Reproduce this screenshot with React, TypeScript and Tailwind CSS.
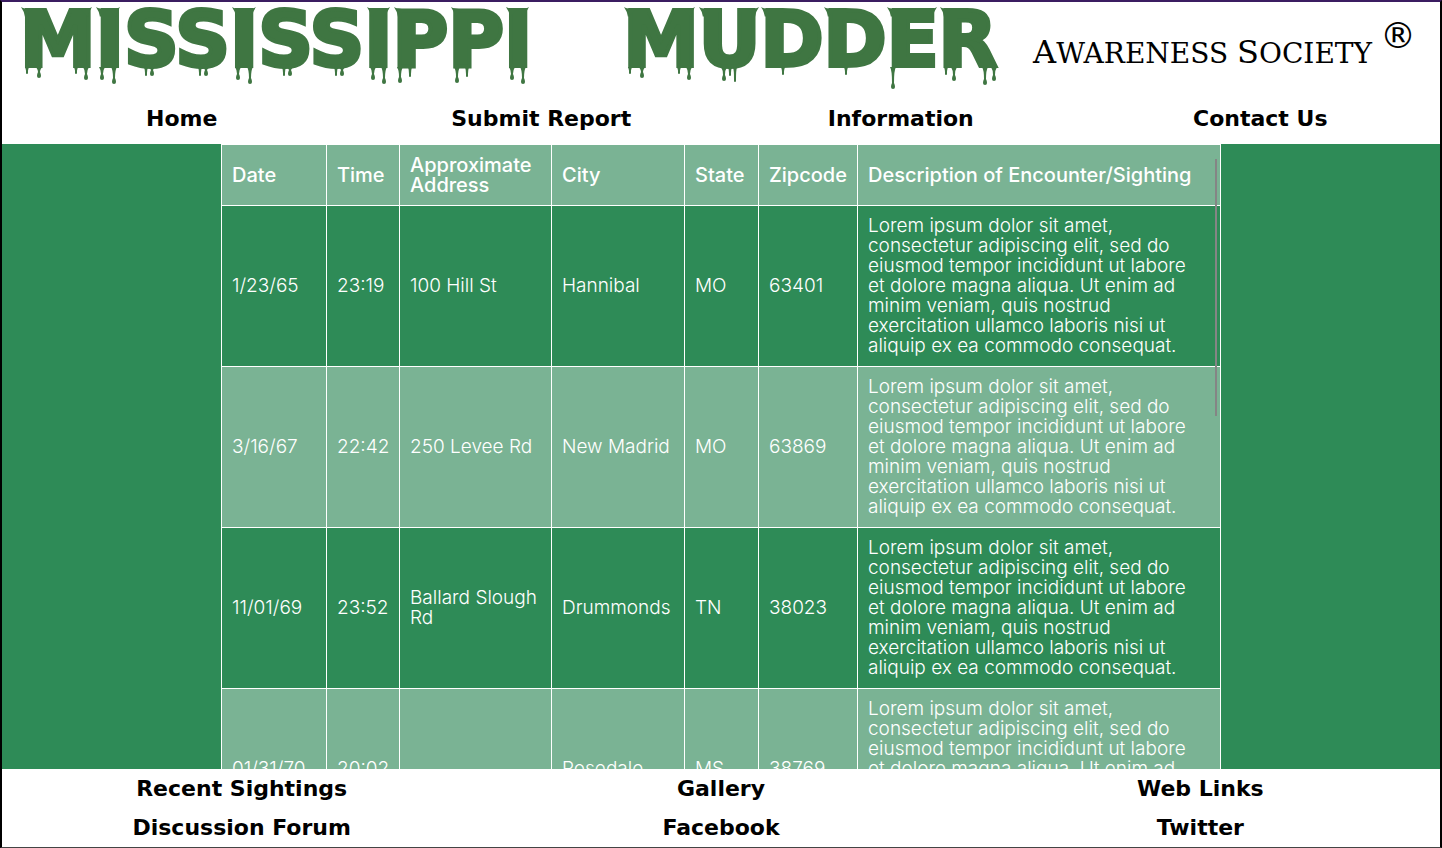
const LOREM =
  "Lorem ipsum dolor sit amet, consectetur adipiscing elit, sed do eiusmod tempor incididunt ut labore et dolore magna aliqua. Ut enim ad minim veniam, quis nostrud exercitation ullamco laboris nisi ut aliquip ex ea commodo consequat.";

const topLinks = ["Home", "Submit Report", "Information", "Contact Us"];
const bottomLinks = ["Recent Sightings", "Gallery", "Web Links", "Discussion Forum", "Facebook", "Twitter"];

const columns = [
  { label: "Date", width: "w-[105px]" },
  { label: "Time", width: "w-[73px]" },
  { label: "Approximate Address", width: "w-[152px]" },
  { label: "City", width: "w-[133px]" },
  { label: "State", width: "w-[74px]" },
  { label: "Zipcode", width: "w-[99px]" },
  { label: "Description of Encounter/Sighting", width: "" },
];

const sightings = [
  ["1/23/65", "23:19", "100 Hill St", "Hannibal", "MO", "63401"],
  ["3/16/67", "22:42", "250 Levee Rd", "New Madrid", "MO", "63869"],
  ["11/01/69", "23:52", "Ballard Slough Rd", "Drummonds", "TN", "38023"],
  ["01/31/70", "20:02", "", "Rosedale", "MS", "38769"],
];

type Drip = { x: number; len: number; r: number };

type DripWordProps = { text: string; drips: Drip[]; leftTips: number[]; rightTips: number[] };

function DripWord({ text, drips, leftTips, rightTips }: DripWordProps) {
  return (
    <span className="relative block font-['DejaVu_Sans'] text-[76px] leading-[76px] font-bold text-[#3f7642] [-webkit-text-stroke:4px_#3f7642]">
      {text}
      <svg className="absolute inset-0 h-full w-full overflow-visible fill-[#3f7642]" aria-hidden="true">
        {leftTips.map((x) => (
          <path key={`l${x}`} d={`M${x - 3} 5 Q${x} 7 ${x + 9} 7 L${x + 1} 15 Q${x} 9 ${x - 3} 5Z`} />
        ))}
        {rightTips.map((x) => (
          <path key={`r${x}`} d={`M${x + 3} 5 Q${x} 7 ${x - 9} 7 L${x - 1} 15 Q${x} 9 ${x + 3} 5Z`} />
        ))}
        {drips.map(({ x, len, r }) => (
          <path
            key={x}
            transform="translate(0 65)"
            d={`M${x - r - 1} 0 Q${x - 1} 3 ${x - 1} ${len - r * 3} Q${x - r} ${len - r * 2} ${x - r} ${len - r} A${r} ${r} 0 0 0 ${x + r} ${len - r} Q${x + r} ${len - r * 2} ${x + 1} ${len - r * 3} Q${x + 1} 3 ${x + r + 1} 0Z`}
          />
        ))}
      </svg>
    </span>
  );
}

const mississippiDrips: Drip[] = [
  { x: 7, len: 7, r: 1 }, { x: 19, len: 11, r: 2 }, { x: 56, len: 7, r: 1 }, { x: 66, len: 13, r: 2 },
  { x: 82, len: 13, r: 2 }, { x: 94, len: 17, r: 2 },
  { x: 126, len: 9, r: 1 }, { x: 132, len: 9, r: 2 }, { x: 180, len: 9, r: 1 }, { x: 186, len: 9, r: 2 },
  { x: 218, len: 13, r: 2 }, { x: 230, len: 17, r: 2 },
  { x: 264, len: 9, r: 1 }, { x: 270, len: 9, r: 2 }, { x: 316, len: 9, r: 1 }, { x: 322, len: 9, r: 2 },
  { x: 353, len: 13, r: 2 }, { x: 364, len: 17, r: 2 },
  { x: 380, len: 16, r: 2 }, { x: 390, len: 10, r: 1 }, { x: 437, len: 16, r: 2 }, { x: 447, len: 10, r: 1 },
  { x: 492, len: 13, r: 2 }, { x: 503, len: 17, r: 2 },
];

const mudderDrips: Drip[] = [
  { x: 7, len: 7, r: 1 }, { x: 19, len: 11, r: 2 }, { x: 56, len: 7, r: 1 }, { x: 66, len: 13, r: 2 },
  { x: 101, len: 14, r: 2 }, { x: 107, len: 9, r: 1 }, { x: 112, len: 15, r: 1 },
  { x: 160, len: 8, r: 1 }, { x: 223, len: 8, r: 1 }, { x: 270, len: 22, r: 2 },
  { x: 323, len: 8, r: 1 }, { x: 331, len: 14, r: 2 }, { x: 362, len: 18, r: 2 }, { x: 371, len: 14, r: 2 },
];

export default function App() {
  return (
    <div className="flex h-screen flex-col border-2 border-b border-t-[#3b1d61] border-r-black border-b-[#444444] border-l-black bg-white">
      <header className="shrink-0">
        <h1 className="flex h-[92px] items-start justify-between pr-6 pl-[18px]">
          <span className="flex grow justify-between pr-9">
            <DripWord
              text="MISSISSIPPI"
              drips={mississippiDrips}
              leftTips={[4, 79, 215, 350, 377, 434, 489]}
              rightTips={[69, 97, 233, 367, 506]}
            />
            <DripWord
              text="MUDDER"
              drips={mudderDrips}
              leftTips={[4, 79, 141, 204, 267, 320]}
              rightTips={[69, 133, 311]}
            />
          </span>
          <span className="flex items-start gap-2 font-['DejaVu_Serif'] text-[28px] leading-9 font-normal whitespace-nowrap text-black">
            <span className="pt-8">
              <span className="text-[32px]">A</span>WARENESS <span className="text-[32px]">S</span>OCIETY
            </span>
            <span className="pt-[14px] font-['DejaVu_Sans'] text-4xl">®</span>
          </span>
        </h1>
        <nav className="grid h-[50px] grid-cols-4 items-center justify-items-center">
          {topLinks.map((label) => (
            <a key={label} href="#" className="font-['DejaVu_Sans'] text-[22px] leading-10 font-bold text-black">
              {label}
            </a>
          ))}
        </nav>
      </header>

      <main className="relative min-h-0 flex-1 bg-[#2e8b57]">
        <div className="mx-auto h-full max-w-[1000px] overflow-y-auto [scrollbar-width:none]">
          <table className="w-full table-fixed border-collapse text-left font-['Inter'] text-[19px] leading-5 font-light text-white">
            <thead>
              <tr className="bg-[#7ab394] text-xl leading-5">
                {columns.map(({ label, width }) => (
                  <th key={label} scope="col" className={`${width} border border-white p-[10px] font-medium`}>
                    {label}
                  </th>
                ))}
              </tr>
            </thead>
            <tbody>
              {sightings.map((row) => (
                <tr key={row[0]} className="even:bg-[#7ab394]">
                  {row.map((value, i) => (
                    <td key={i} className="border border-white p-[10px]">
                      {value}
                    </td>
                  ))}
                  <td className="border border-white py-[10px] pr-5 pl-[10px]">{LOREM}</td>
                </tr>
              ))}
            </tbody>
          </table>
        </div>
        <div className="pointer-events-none absolute inset-0 mx-auto flex max-w-[1000px] justify-end pt-[15px] pr-1" aria-hidden="true">
          <div className="h-[257px] w-[2px] bg-[#858585]" />
        </div>
      </main>

      <footer className="grid shrink-0 grid-cols-3 justify-items-center">
        {bottomLinks.map((label) => (
          <a key={label} href="#" className="font-['DejaVu_Sans'] text-[22px] leading-[39px] font-bold text-black">
            {label}
          </a>
        ))}
      </footer>
    </div>
  );
}
